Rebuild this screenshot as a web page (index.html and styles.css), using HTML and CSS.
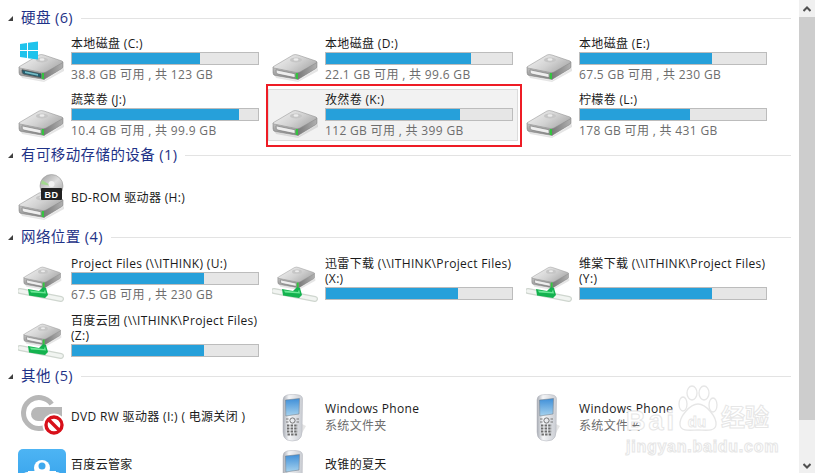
FILE: index.html
```html
<!DOCTYPE html>
<html lang="zh">
<head>
<meta charset="utf-8">
<title>计算机</title>
<link rel="stylesheet" href="styles.css">
</head>
<body>
<svg class="defs" aria-hidden="true">
  <defs>
    <linearGradient id="gTop" x1="0" y1="0" x2="1" y2="0.6"><stop offset="0" stop-color="#f6f6f6"/><stop offset=".6" stop-color="#d2d2d2"/><stop offset="1" stop-color="#adadad"/></linearGradient>
    <linearGradient id="gFront" x1="0" y1="0" x2="0" y2="1"><stop offset="0" stop-color="#c4c4c4"/><stop offset="1" stop-color="#8b8b8b"/></linearGradient>
    <linearGradient id="gRight" x1="0" y1="0" x2="1" y2="0"><stop offset="0" stop-color="#7a7a7a"/><stop offset="1" stop-color="#b0b0b0"/></linearGradient>
    <linearGradient id="gDisc" x1="0" y1="0" x2="1" y2="1"><stop offset="0" stop-color="#9b9b9b"/><stop offset=".5" stop-color="#dedede"/><stop offset="1" stop-color="#9a9a9a"/></linearGradient>
    <linearGradient id="gPhone" x1="0" y1="0" x2="1" y2="0"><stop offset="0" stop-color="#a9adb5"/><stop offset=".3" stop-color="#f4f5f7"/><stop offset="1" stop-color="#c9ccd2"/></linearGradient>
    <linearGradient id="gScreen" x1="0" y1="0" x2="0" y2="1"><stop offset="0" stop-color="#3f8fd8"/><stop offset="1" stop-color="#a6d2ee"/></linearGradient>
    <linearGradient id="gBlue" x1="0" y1="0" x2="0" y2="1"><stop offset="0" stop-color="#4db4f4"/><stop offset="1" stop-color="#2f9ce8"/></linearGradient>
    <symbol id="drive" viewBox="0 0 48 30">
      <path d="M3 24 L26 28.500 L46 16 L46 19 L26 30 L4 26 Z" fill="#000" opacity=".1"/>
      <path d="M1 15 L26 20 L26 27.500 L3 23.500 Q1 23 1 20.500 Z" fill="url(#gFront)" stroke="#777" stroke-width=".5"/>
      <path d="M26 20 L45 10 L45 15 Q45 16 44 16.500 L26 27.500 Z" fill="url(#gRight)" stroke="#777" stroke-width=".5"/>
      <path d="M1.500 14.500 L21 3 Q23 2 26 3 L44 9 Q46 10 44 11 L28 20 Q26 21 24 20.500 L2 16 Q0.500 15.500 1.500 14.500 Z" fill="url(#gTop)" stroke="#8a8a8a" stroke-width=".5"/>
      <ellipse cx="24" cy="8" rx="6" ry="2.600" fill="#c6c6c6"/>
      <ellipse cx="24" cy="7.500" rx="2.500" ry="1.200" fill="#ececec"/>
      <path d="M4 17.800 L23 21.800 L23 25.600 L5.500 22 Q4 21.500 4 17.800 Z" fill="#eeeeee" stroke="#6f6f6f" stroke-width=".6"/>
      <rect x="23.700" y="21" width="2.300" height="6" fill="#34c43f"/>
    </symbol>
    <symbol id="driveSys" viewBox="0 0 48 30">
      <use href="#drive" width="48" height="30"/>
      <path d="M4 17.800 L23 21.800 L23 25.600 L5.500 22 Q4 21.500 4 17.800 Z" fill="#245f70" stroke="#4a4a4a" stroke-width=".6"/>
      <path d="M7 19.200 L20 22 L20 23.800 L7 21 Z" fill="#76bcc6"/>
    </symbol>
    <symbol id="netDrive" viewBox="0 0 48 42">
      <use href="#drive" x="5" y="3" width="40" height="25"/>
      <path d="M2 29 L43 37" stroke="#cfd6cf" stroke-width="6" stroke-linecap="round"/>
      <path d="M2 29 L43 37" stroke="#f1f4f1" stroke-width="3.500" stroke-linecap="round"/>
      <path d="M10 27 L21 29 L25 25 L28 26 L30 33 L27 36 L11 33.500 Z" fill="#14b24f"/>
      <path d="M12 28.500 L26 30 L27 27.500 L28 31.500 L13 30.500 Z" fill="#6be895"/>
    </symbol>
    <symbol id="bdDrive" viewBox="0 0 48 46">
      <use href="#drive" y="16" width="48" height="30"/>
      <circle cx="33.500" cy="12" r="11.500" fill="url(#gDisc)" stroke="#9a9a9a" stroke-width=".6"/>
      <path d="M24 6 L33.500 12 L23 10 Z" fill="#a3d98f"/>
      <circle cx="33.500" cy="10" r="3" fill="#f1f1f1"/>
      <rect x="23" y="14" width="21" height="12" rx="1" fill="#222"/>
      <text x="33.500" y="23.500" class="bd">BD</text>
    </symbol>
    <symbol id="phone" viewBox="0 0 24 48">
      <path d="M20 30 L24 32 L16 46 L10 47 Z" fill="#000" opacity=".1"/>
      <path d="M5 1 Q11 -.5 17 1 Q21 2 20.500 6 L20 38 Q20 44 16 46 Q10 48 5 46 Q1 44 1 38 L1 6 Q1 2 5 1 Z" fill="url(#gPhone)" stroke="#b0b3ba" stroke-width=".5"/>
      <path d="M3.500 6 L17.500 4.500 L17 20 L3.800 22 Z" fill="url(#gScreen)" stroke="#6f7780" stroke-width=".5"/>
      <circle cx="10.500" cy="26.500" r="2.600" fill="none" stroke="#777"/>
      <path d="M4 25 H6.500 M14.500 25 H17 M4 28 H6.500 M14.500 28 H17" stroke="#777"/>
      <path d="M5 31.500 H16 M5 34.500 H16 M5 37.500 H16 M5.500 40.500 H15.500" stroke="#6d6d6d" stroke-width="1.800" stroke-dasharray="2.400 1.200"/>
    </symbol>
  </defs>
</svg>

<main class="view">
  <section class="group group-disks">
    <h2 class="group-head"><span class="tri"></span><span class="group-title">硬盘 (6)</span><span class="rule"></span></h2>
    <div class="tiles">
      <div class="tile">
        <div class="icon">
          <svg class="ico-sys" viewBox="0 0 48 46"><use href="#driveSys" y="16" width="48" height="30"/><path d="M2 8 L9 7 V14 H2 Z M10 6.800 L20 5.400 V14 H10 Z M2 15 H9 V22 L2 21 Z M10 15 H20 V23.600 L10 22.200 Z" fill="#1fc3ec"/></svg>
        </div>
        <div class="info"><div class="name">本地磁盘 (C:)</div><div class="bar"><div class="fill" style="width:69%"></div></div><div class="sub">38.8 GB 可用 , 共 123 GB</div></div>
      </div>
      <div class="tile">
        <div class="icon"><svg class="ico-drive"><use href="#drive"/></svg></div>
        <div class="info"><div class="name">本地磁盘 (D:)</div><div class="bar"><div class="fill" style="width:78%"></div></div><div class="sub">22.1 GB 可用 , 共 99.6 GB</div></div>
      </div>
      <div class="tile">
        <div class="icon"><svg class="ico-drive"><use href="#drive"/></svg></div>
        <div class="info"><div class="name">本地磁盘 (E:)</div><div class="bar"><div class="fill" style="width:71%"></div></div><div class="sub">67.5 GB 可用 , 共 230 GB</div></div>
      </div>
      <div class="tile">
        <div class="icon"><svg class="ico-drive"><use href="#drive"/></svg></div>
        <div class="info"><div class="name">蔬菜卷 (J:)</div><div class="bar"><div class="fill" style="width:90%"></div></div><div class="sub">10.4 GB 可用 , 共 99.9 GB</div></div>
      </div>
      <div class="tile selected">
        <div class="icon"><svg class="ico-drive"><use href="#drive"/></svg></div>
        <div class="info"><div class="name">孜然卷 (K:)</div><div class="bar"><div class="fill" style="width:72%"></div></div><div class="sub">112 GB 可用 , 共 399 GB</div></div>
        <span class="mark"></span>
      </div>
      <div class="tile">
        <div class="icon"><svg class="ico-drive"><use href="#drive"/></svg></div>
        <div class="info"><div class="name">柠檬卷 (L:)</div><div class="bar"><div class="fill" style="width:59%"></div></div><div class="sub">178 GB 可用 , 共 431 GB</div></div>
      </div>
    </div>
  </section>

  <section class="group group-removable">
    <h2 class="group-head"><span class="tri"></span><span class="group-title">有可移动存储的设备 (1)</span><span class="rule"></span></h2>
    <div class="tiles">
      <div class="tile tile-plain tile-bd">
        <div class="icon"><svg class="ico-bd"><use href="#bdDrive"/></svg></div>
        <div class="info"><div class="name">BD-ROM 驱动器 (H:)</div></div>
      </div>
    </div>
  </section>

  <section class="group group-net">
    <h2 class="group-head"><span class="tri"></span><span class="group-title">网络位置 (4)</span><span class="rule"></span></h2>
    <div class="tiles">
      <div class="tile">
        <div class="icon"><svg class="ico-net"><use href="#netDrive"/></svg></div>
        <div class="info"><div class="name">Project Files (\\ITHINK) (U:)</div><div class="bar"><div class="fill" style="width:71%"></div></div><div class="sub">67.5 GB 可用 , 共 230 GB</div></div>
      </div>
      <div class="tile">
        <div class="icon"><svg class="ico-net"><use href="#netDrive"/></svg></div>
        <div class="info"><div class="name">迅雷下载 (\\ITHINK\Project Files) (X:)</div><div class="bar"><div class="fill" style="width:71%"></div></div></div>
      </div>
      <div class="tile">
        <div class="icon"><svg class="ico-net"><use href="#netDrive"/></svg></div>
        <div class="info"><div class="name">维棠下载 (\\ITHINK\Project Files) (Y:)</div><div class="bar"><div class="fill" style="width:71%"></div></div></div>
      </div>
      <div class="tile">
        <div class="icon"><svg class="ico-net"><use href="#netDrive"/></svg></div>
        <div class="info"><div class="name">百度云团 (\\ITHINK\Project Files) (Z:)</div><div class="bar"><div class="fill" style="width:71%"></div></div></div>
      </div>
    </div>
  </section>

  <section class="group group-other">
    <h2 class="group-head"><span class="tri"></span><span class="group-title">其他 (5)</span><span class="rule"></span></h2>
    <div class="tiles">
      <div class="tile tile-plain">
        <div class="icon">
          <svg class="ico-dvd" viewBox="0 0 48 42"><path d="M33.700 9.100 A15.500 15.500 0 1 0 32 29" fill="none" stroke="#b7b7b7" stroke-width="5"/><path d="M20 12 H44 V26 H20 A7 7 0 0 1 20 12 Z" fill="#b7b7b7"/><circle cx="36" cy="30" r="11.500" fill="#fff"/><circle cx="36" cy="30" r="8" fill="#fff" stroke="#d8101a" stroke-width="3.400"/><path d="M30.500 24.500 L41.500 35.500" stroke="#d8101a" stroke-width="3.400"/></svg>
        </div>
        <div class="info"><div class="name">DVD RW 驱动器 (I:) ( 电源关闭 )</div></div>
      </div>
      <div class="tile tile-plain">
        <div class="icon"><svg class="ico-phone"><use href="#phone"/></svg></div>
        <div class="info info-dual"><div class="name">Windows Phone</div><div class="sub">系统文件夹</div></div>
      </div>
      <div class="tile tile-plain">
        <div class="icon"><svg class="ico-phone"><use href="#phone"/></svg></div>
        <div class="info info-dual"><div class="name">Windows Phone</div><div class="sub">系统文件夹</div></div>
      </div>
      <div class="tile tile-plain">
        <div class="icon">
          <svg class="ico-cloud" viewBox="0 0 48 48"><rect width="48" height="48" rx="5" fill="url(#gBlue)"/><circle cx="24" cy="19" r="8" fill="#fff"/><circle cx="24" cy="17" r="3.500" fill="#3fa9ee"/><circle cx="10" cy="31" r="8" fill="#fff"/><circle cx="38" cy="31" r="8" fill="#fff"/><rect x="10" y="22" width="28" height="17" fill="#fff"/></svg>
        </div>
        <div class="info info-up"><div class="name">百度云管家</div></div>
      </div>
      <div class="tile tile-plain">
        <div class="icon"><svg class="ico-phone"><use href="#phone"/></svg></div>
        <div class="info info-up"><div class="name">改锥的夏天</div></div>
      </div>
    </div>
  </section>

  <div class="watermark">
    <div class="wm-row">
      <span class="wm-bai">Bai</span>
      <svg class="wm-paw" viewBox="0 0 40 48"><g fill="none" stroke="#e6e6e6" stroke-width="1.300"><ellipse cx="5" cy="19" rx="4" ry="7"/><ellipse cx="14" cy="8" rx="5" ry="7"/><ellipse cx="26" cy="8" rx="5" ry="7"/><ellipse cx="35" cy="20" rx="4" ry="7"/><path d="M20 19 C12 19 1 32 2 40 C3 47 13 45 20 45 C27 45 37 47 38 40 C39 32 28 19 20 19 Z"/></g><text x="19" y="42" class="wm-du">du</text></svg>
      <span class="wm-cn">经验</span>
    </div>
    <div class="wm-url">jingyan.baidu.com</div>
  </div>
</main>

<aside class="scrollbar">
  <div class="sb-btn"><svg class="chev" viewBox="0 0 8 6"><path d="M0.500 5 L4 1.500 L7.500 5" fill="none" stroke="#505050" stroke-width="2"/></svg></div>
  <div class="sb-track"><div class="sb-thumb"></div></div>
  <div class="sb-btn sb-btn-down"><svg class="chev" viewBox="0 0 8 6"><path d="M0.500 1 L4 4.500 L7.500 1" fill="none" stroke="#505050" stroke-width="2"/></svg></div>
</aside>
</body>
</html>
```

FILE: styles.css
```css
* { box-sizing: border-box; }
html, body { height: 100%; }
body {
  margin: 0;
  display: flex;
  overflow: hidden;
  background: #fff;
  color: #1a1a1a;
  font: 12px/15px "Open Sans", "Noto Sans CJK SC", sans-serif;
  letter-spacing: .33px;
}
.defs { position: absolute; width: 0; height: 0; }
.view { position: relative; flex: 1; min-width: 0; padding-top: 9px; overflow: hidden; }
.group-head {
  display: flex;
  align-items: center;
  height: 18px;
  margin: 0;
  padding-left: 8px;
  font-weight: 400;
  font-size: 14.500px;
  line-height: 18px;
  letter-spacing: .4px;
  color: #1e3287;
}
.tri {
  width: 0; height: 0;
  margin-right: 8px;
  border-style: solid;
  border-width: 0 0 5px 5px;
  border-color: transparent transparent #404040 transparent;
}
.group-title { white-space: nowrap; }
.rule { flex: 1; height: 1px; margin: 0 8px 0 8px; background: #e3e3e3; }
.tiles {
  display: grid;
  grid-template-columns: repeat(3, 254px);
  padding-left: 14px;
}
.group-disks .tiles { row-gap: 4px; margin-top: 6px; margin-bottom: 5px; }
.group-removable .tiles { margin-top: 6px; margin-bottom: 4px; }
.group-net .tiles { row-gap: 5px; margin-top: 7px; margin-bottom: 5px; }
.group-other .tiles { row-gap: 8px; margin-top: 7px; }
.tile {
  position: relative;
  display: flex;
  align-items: flex-start;
  height: 52px;
  width: 250px;
  padding: 2px 0 0 4px;
  border: 1px solid transparent;
}
.tile-plain { height: 48px; align-items: center; padding-top: 0; }
.tile-bd { height: 54px; }
.selected { background: #f2f2f2; border-color: #dcdcdc; }
.mark {
  position: absolute;
  left: -3px; top: -6px; right: -5px; bottom: -7px;
  border: 2px solid #ee1c25;
}
.icon { flex: none; width: 52px; height: 44px; display: flex; align-items: center; }
.tile-plain .icon { height: 48px; }
.ico-drive { flex: none; width: 48px; height: 30px; margin: 18px 0 0 -1px; }
.ico-sys { flex: none; width: 48px; height: 46px; margin: 2px 0 0 -1px; }
.ico-net { flex: none; width: 48px; height: 42px; margin: 10px 0 0 -1px; }
.ico-bd { flex: none; width: 48px; height: 46px; margin-left: -1px; }
.ico-dvd { flex: none; width: 48px; height: 42px; margin-left: -1px; }
.ico-phone { flex: none; width: 24px; height: 48px; margin: 4px 0 0 9px; }
.ico-cloud { flex: none; width: 48px; height: 48px; margin: 2px 0 0 -1px; }
.info { flex: none; width: 188px; }
.info-dual { padding-top: 2px; }
.info-up { padding-bottom: 16px; }
.name { color: #1a1a1a; }
.bar {
  height: 13px;
  margin-top: 1px;
  border: 1px solid #bcbcbc;
  background: #e6e6e6;
}
.fill { height: 100%; background: #26a0da; }
.sub { margin-top: 2px; color: #6d6d6d; }
.bd { font: 700 9px "Liberation Sans", sans-serif; fill: #fff; text-anchor: middle; letter-spacing: .5px; }

.watermark {
  position: absolute;
  left: 626px; top: 385px;
  color: #fff;
  -webkit-text-stroke: 1px #e6e6e6;
  letter-spacing: 0;
}
.wm-row { display: flex; align-items: flex-end; height: 48px; }
.wm-bai { font: 700 27px/24px "Liberation Sans", sans-serif; letter-spacing: 3px; margin-right: 1px; }
.wm-paw { flex: none; width: 40px; height: 48px; overflow: visible; }
.wm-du { font: 700 15px "Liberation Sans", sans-serif; fill: #fff; stroke: #e6e6e6; stroke-width: .8px; text-anchor: middle; }
.wm-cn { font: 700 24px/26px "Noto Sans CJK SC", sans-serif; margin: 0 0 4px 3px; }
.wm-url { font: 700 16px/20px "Liberation Sans", sans-serif; letter-spacing: .75px; margin-top: 4px; }

.scrollbar { flex: none; width: 16px; display: flex; flex-direction: column; background: #f0f0f0; }
.sb-btn { flex: none; height: 17px; display: flex; align-items: center; justify-content: center; }
.sb-btn-down { padding-top: 2px; }
.sb-track { flex: 1; }
.sb-thumb { height: 403px; background: #cdcdcd; }
.chev { width: 8px; height: 6px; }
```
